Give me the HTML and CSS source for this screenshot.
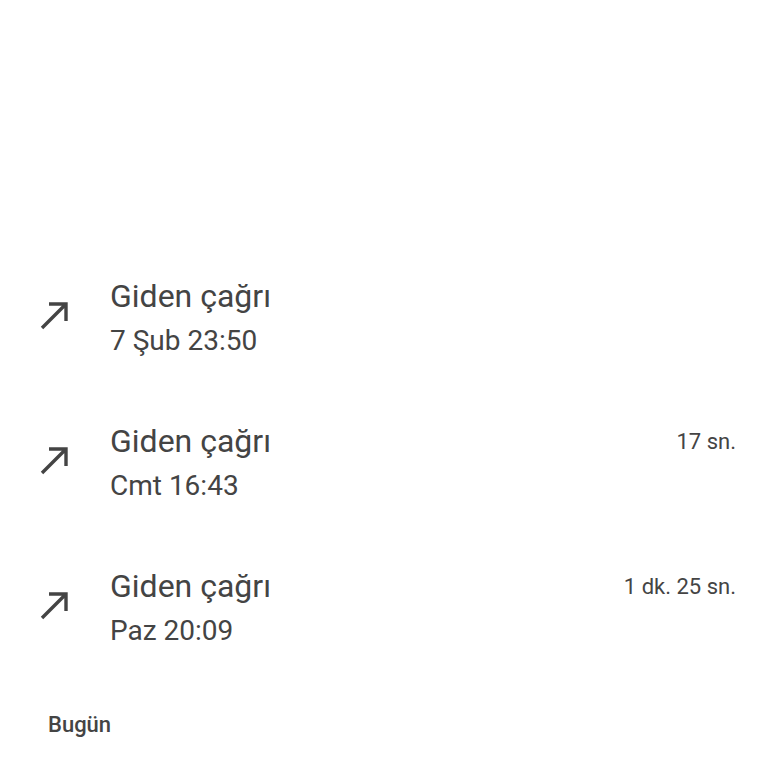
FILE: index.html
```html
<!DOCTYPE html>
<html lang="tr">
<head>
    <meta charset="UTF-8">
    <meta name="viewport" content="width=device-width, initial-scale=1.0">
    <link rel="stylesheet" href="styles.css">
    <title>Arama geçmişi</title>
</head>
<body>

<div id="lista">

    <div class="chamada">
        <svg class="seta" viewBox="0 0 32 32"><path d="M4 28 L28 4 M11 4 H28 V21" /></svg>
        <div class="info">
            <p class="tipo">Giden çağrı</p>
            <p class="data">7 Şub 23:50</p>
        </div>
        <p class="duracao"></p>
    </div>

    <div class="chamada">
        <svg class="seta" viewBox="0 0 32 32"><path d="M4 28 L28 4 M11 4 H28 V21" /></svg>
        <div class="info">
            <p class="tipo">Giden çağrı</p>
            <p class="data">Cmt 16:43</p>
        </div>
        <p class="duracao">17 sn.</p>
    </div>

    <div class="chamada">
        <svg class="seta" viewBox="0 0 32 32"><path d="M4 28 L28 4 M11 4 H28 V21" /></svg>
        <div class="info">
            <p class="tipo">Giden çağrı</p>
            <p class="data">Paz 20:09</p>
        </div>
        <p class="duracao">1 dk. 25 sn.</p>
    </div>

</div>

<p id="hoje">Bugün</p>

</body>
</html>
```

FILE: styles.css
```css
body {
    margin: 0;
    background: white;
    font-family: Roboto, "Noto Sans", sans-serif;
    color: #444444;
}

p {
    margin: 0;
}

#lista {
    padding-top: 246px;
}

.chamada {
    height: 145px;
    display: flex;
    align-items: center;
    padding: 0 32px 0 38px;
}

.seta {
    width: 32px;
    height: 32px;
    margin-right: 40px;
    margin-top: -6px;
    fill: none;
    stroke: #444444;
    stroke-width: 3.4;
}

.info {
    flex: 1;
    margin-top: 5px;
}

.tipo {
    font-size: 32px;
    line-height: 40px;
}

.data {
    font-size: 28px;
    line-height: 50px;
}

.duracao {
    font-size: 22px;
    margin-top: -44px;
}

#hoje {
    padding: 31px 0 0 48px;
    font-size: 22px;
    font-weight: 500;
}
```
